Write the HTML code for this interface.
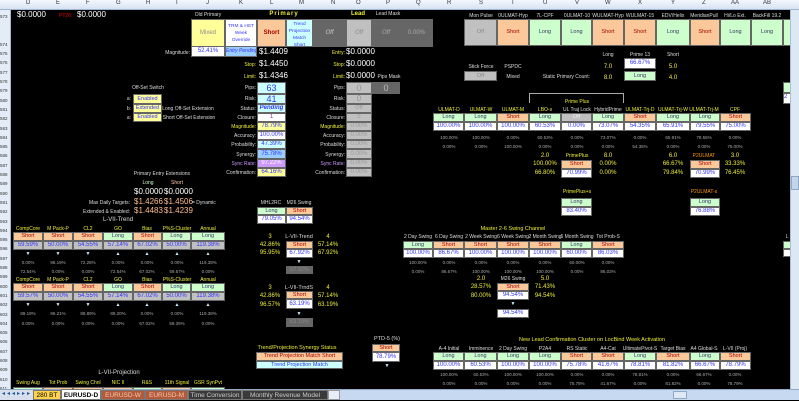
<!DOCTYPE html><html><head><meta charset="utf-8"><style>
body{margin:0;width:799px;height:400px;background:#000;overflow:hidden;position:relative;font-family:"Liberation Sans",sans-serif}
div{position:absolute;box-sizing:border-box;white-space:nowrap}
.t{font-size:5px;color:#ddd;transform:translateX(-50%)}
.r{font-size:5px;color:#ddd;transform:translateX(-100%)}
.y{color:#ee3}.o{color:#f90}.p{color:#c9f}
.v{font-size:8px;color:#fff}
.b{border:1px solid #666;text-align:center;font-size:5.5px;overflow:hidden}
.b[style*="font-size:7px"]{font-size:6px!important}
.g{background:#ccffcc;color:#336}.s{background:#fbc89a;color:#a00}.w{background:#fff;color:#33f;font-size:6px}
.gr{background:#c0c0c0;color:#33f;font-size:6px}.dg{background:#666;color:#999}.lg{background:#c0c0c0;color:#888}
.ye{background:#ffff99;color:#33f}.cy{background:#ccffff;color:#33f}.lb{background:#99ccff;color:#33f}
.sm{font-size:4.5px;color:#aaa;transform:translateX(-50%)}
</style></head><body>
<div style="left:0;top:0;width:799px;height:10px;background:linear-gradient(#f4f8fd,#d6e3f2);border-bottom:1px solid #9eb6ce;font-size:6px;color:#333">
<span style="position:absolute;left:26px">D</span><span style="position:absolute;left:56px">E</span><span style="position:absolute;left:86px">F</span><span style="position:absolute;left:116px">G</span><span style="position:absolute;left:146px">H</span><span style="position:absolute;left:176px">I</span><span style="position:absolute;left:206px">J</span><span style="position:absolute;left:239px">K</span><span style="position:absolute;left:270px">L</span><span style="position:absolute;left:299px">M</span><span style="position:absolute;left:331px">N</span><span style="position:absolute;left:356px">O</span><span style="position:absolute;left:386px">P</span><span style="position:absolute;left:416px">Q</span><span style="position:absolute;left:447px">R</span><span style="position:absolute;left:479px">S</span><span style="position:absolute;left:511px">T</span><span style="position:absolute;left:543px">U</span><span style="position:absolute;left:575px">V</span><span style="position:absolute;left:605px">W</span><span style="position:absolute;left:638px">X</span><span style="position:absolute;left:671px">Y</span><span style="position:absolute;left:702px">Z</span><span style="position:absolute;left:731px">AA</span><span style="position:absolute;left:763px">AB</span></div>
<div style="left:0;top:10px;width:11px;height:380px;background:#e4ecf7;border-right:1px solid #9eb6ce;font-size:4.5px;color:#333;line-height:9.3px;white-space:normal;overflow:hidden;padding-top:2px">573<br><br><br>574<br>575<br>576<br>577<br>578<br>579<br>580<br>581<br>582<br>583<br>584<br>585<br>586<br>587<br>588<br>589<br>590<br>591<br>592<br>593<br>594<br>595<br>596<br>597<br>598<br>599<br>600<br>601<br>602<br>603<br>604<br>605<br>606<br>607<br>608<br>609<br>610<br>611</div>

<div class="v" style="left:17px;top:10px">$0.0000</div>
<div style="left:59px;top:13px;font-size:5px;color:#e00">PT26:</div>
<div class="v" style="left:77px;top:10px">$0.0000</div>
<div class="t" style="left:208px;top:12px">Old Primary</div>
<div class="t y" style="left:284px;top:11px;font-size:6px;font-weight:bold;letter-spacing:1px">Primary</div>
<div class="t y" style="left:358px;top:11px;font-size:6px;font-weight:bold">Lead</div>
<div class="t" style="left:388px;top:11px">Lead Mask</div>
<div class="t" style="left:481px;top:13px">Mon Pulse</div><div class="t" style="left:513px;top:13px">0ULMAT-Hyp</div><div class="t" style="left:545px;top:13px">7L-CPF</div><div class="t" style="left:577px;top:13px">0ULMAT-10</div><div class="t" style="left:608px;top:13px">WULMAT-Hyp</div><div class="t" style="left:640px;top:13px">WULMAT-15</div><div class="t" style="left:673px;top:13px">EDV/Helix</div><div class="t" style="left:704px;top:13px">MeridianPull</div><div class="t" style="left:735px;top:13px">Hi/Lo Ext.</div><div class="t" style="left:767px;top:13px">BackFill 19.2</div>
<div class="b ye" style="left:191px;top:19px;width:34px;height:28px;line-height:26px;color:#888;font-size:7px">Mixed</div>
<div class="b" style="left:225px;top:19px;width:32px;height:28px;background:#fff;color:#33f;font-size:4.8px;white-space:normal;padding-top:3px;line-height:7px">TRM &amp; HST Week Override</div>
<div class="b s" style="left:257px;top:19px;width:29px;height:28px;line-height:26px;font-weight:bold;font-size:7px">Short</div>
<div class="b cy" style="left:286px;top:19px;width:27px;height:28px;font-size:4.8px;white-space:normal;padding-top:1px;line-height:7px">Trend Projection Match Short</div>
<div class="b dg" style="left:313px;top:19px;width:33px;height:28px;line-height:26px;color:#ccc;font-style:italic;font-size:7px">Off</div>
<div class="b lg" style="left:346px;top:19px;width:26px;height:28px;line-height:26px;color:#888;font-style:italic;font-size:7px">Off</div>
<div class="b dg" style="left:372px;top:19px;width:28px;height:28px;line-height:26px;color:#aaa;font-style:italic;font-size:7px">Off</div>
<div class="b dg" style="left:400px;top:19px;width:33px;height:28px;line-height:26px;color:#aaa;font-size:7px">0.00%</div>
<div class="b lg" style="left:464px;top:19px;width:33px;height:27px;line-height:25px">Off</div>
<div class="b s" style="left:497px;top:19px;width:32px;height:27px;line-height:25px">Short</div>
<div class="b g" style="left:529px;top:19px;width:32px;height:27px;line-height:25px">Long</div>
<div class="b g" style="left:561px;top:19px;width:31px;height:27px;line-height:25px">Long</div>
<div class="b s" style="left:592px;top:19px;width:32px;height:27px;line-height:25px">Short</div>
<div class="b s" style="left:624px;top:19px;width:32px;height:27px;line-height:25px">Short</div>
<div class="b g" style="left:656px;top:19px;width:34px;height:27px;line-height:25px">Long</div>
<div class="b s" style="left:690px;top:19px;width:30px;height:27px;line-height:25px">Short</div>
<div class="b g" style="left:720px;top:19px;width:31px;height:27px;line-height:25px">Long</div>
<div class="b g" style="left:751px;top:19px;width:32px;height:27px;line-height:25px">Long</div>
<div class="b g" style="left:783px;top:19px;width:8px;height:27px"></div>
<div class="r" style="left:190px;top:50px">Magnitude:</div>
<div class="b w" style="left:191px;top:46px;width:34px;height:11px;line-height:9px">52.41%</div>
<div class="b lb" style="left:225px;top:46px;width:32px;height:11px;line-height:9px;font-size:5px;font-style:italic">Entry Pending</div>
<div class="v" style="left:259px;top:47px">$1.4409</div>
<div class="r y" style="left:256px;top:62px">Stop:</div><div class="v" style="left:259px;top:59px">$1.4450</div>
<div class="r y" style="left:256px;top:74px">Limit:</div><div class="v" style="left:259px;top:71px">$1.4346</div>
<div class="r y" style="left:345px;top:50px">Entry:</div><div class="v" style="left:346px;top:47px">$0.0000</div>
<div class="r y" style="left:345px;top:62px">Stop:</div><div class="v" style="left:346px;top:59px">$0.0000</div>
<div class="r y" style="left:345px;top:74px">Limit:</div><div class="v" style="left:346px;top:71px">$0.0000</div>
<div class="t" style="left:389px;top:74px">Pips Mask</div>
<div class="t" style="left:608px;top:52px">Long</div><div class="t" style="left:640px;top:52px">Prime 13</div><div class="t" style="left:673px;top:52px">Short</div>
<div class="t" style="left:481px;top:64px">Stick Force</div><div class="t" style="left:513px;top:64px">PSPDC</div>
<div class="t y" style="left:608px;top:64px;font-size:6px">7.0</div>
<div class="b w" style="left:624px;top:58px;width:32px;height:11px;line-height:9px">66.67%</div>
<div class="t y" style="left:673px;top:64px;font-size:6px">5.0</div>
<div class="b lg" style="left:464px;top:71px;width:33px;height:10px;line-height:8px">Off</div>
<div class="t" style="left:513px;top:74px">Mixed</div>
<div class="r" style="left:590px;top:74px">Static Primary Count:</div>
<div class="t y" style="left:608px;top:75px;font-size:6px">8.0</div>
<div class="b g" style="left:624px;top:71px;width:32px;height:10px;line-height:8px">Long</div>
<div class="t y" style="left:673px;top:75px;font-size:6px">4.0</div>
<div class="b g" style="left:783px;top:82px;width:8px;height:11px"></div>
<div class="b w" style="left:783px;top:93px;width:8px;height:11px;text-align:left">2</div>
<div class="t" style="left:148px;top:85px">Off-Set Switch</div>
<div class="r" style="left:256px;top:85px">Pips:</div>
<div class="b cy" style="left:257px;top:82px;width:29px;height:12px;line-height:10px;font-size:9px">63</div>
<div class="r" style="left:345px;top:85px">Pips:</div>
<div class="b lg" style="left:346px;top:82px;width:26px;height:12px;line-height:10px;font-size:9px;color:#999">0</div>
<div class="b dg" style="left:372px;top:82px;width:28px;height:12px;line-height:10px;font-size:9px;color:#bbb">0</div>
<div class="r" style="left:131px;top:96px">a:</div>
<div class="b ye" style="left:133px;top:94px;width:29px;height:10px;line-height:8px;font-size:5.5px">Enabled</div>
<div class="r" style="left:256px;top:96px">Risk:</div>
<div class="b cy" style="left:257px;top:94px;width:29px;height:10px;line-height:8px;font-size:9px">41</div>
<div class="r" style="left:345px;top:96px">Risk:</div>
<div class="b lg" style="left:346px;top:94px;width:26px;height:10px;line-height:8px;font-size:8px;color:#999">0</div>
<div class="r" style="left:131px;top:106px">b:</div>
<div class="b ye" style="left:133px;top:104px;width:29px;height:9px;line-height:7px;font-size:5.5px">Extended</div>
<div class="t" style="left:188px;top:106px">Long Off-Set Extension</div>
<div class="r" style="left:256px;top:106px">Status:</div>
<div class="b cy" style="left:257px;top:104px;width:29px;height:9px;line-height:7px;font-weight:bold;font-style:italic;font-size:6px">Pending</div>
<div class="r" style="left:345px;top:106px">Status:</div>
<div class="b lg" style="left:346px;top:104px;width:26px;height:9px;line-height:7px;color:#999">Off</div>
<div class="r" style="left:131px;top:115px">a:</div>
<div class="b ye" style="left:133px;top:113px;width:29px;height:9px;line-height:7px;font-size:5.5px">Enabled</div>
<div class="t" style="left:189px;top:115px">Short Off-Set Extension</div>
<div class="r" style="left:256px;top:115px">Closure:</div>
<div class="b w" style="left:257px;top:113px;width:29px;height:9px;line-height:7px;color:#939">1</div>
<div class="r" style="left:345px;top:115px">Closure:</div>
<div class="b lg" style="left:346px;top:113px;width:26px;height:9px;line-height:7px;color:#999">0</div>
<div class="r y" style="left:256px;top:124px">Magnitude:</div><div class="b ye" style="left:257px;top:122px;width:29px;height:9px;line-height:7px;font-size:7px">78.79%</div>
<div class="r" style="left:256px;top:133px">Accuracy:</div><div class="b w" style="left:257px;top:131px;width:29px;height:9px;line-height:7px">100.00%</div>
<div class="r" style="left:256px;top:142px">Probability:</div><div class="b cy" style="left:257px;top:140px;width:29px;height:9px;line-height:7px;font-size:7px">47.39%</div>
<div class="r" style="left:256px;top:152px">Synergy:</div><div class="b lb" style="left:257px;top:149px;width:29px;height:10px;line-height:8px;font-size:7px">75.78%</div>
<div class="r p" style="left:256px;top:161px">Sync Rate:</div><div class="b" style="left:257px;top:159px;width:29px;height:9px;line-height:7px;background:#cc99ff;color:#fff;font-size:7px">97.22%</div>
<div class="r" style="left:256px;top:170px">Confirmation:</div><div class="b ye" style="left:257px;top:168px;width:29px;height:9px;line-height:7px;font-size:7px">64.16%</div>
<div class="r y" style="left:345px;top:124px">Magnitude:</div><div class="b lg" style="left:346px;top:122px;width:26px;height:9px;line-height:7px;font-size:7px;color:#999">0.00%</div>
<div class="r" style="left:345px;top:133px">Accuracy:</div><div class="b lg" style="left:346px;top:131px;width:26px;height:9px;line-height:7px;font-size:7px;color:#999">0.00%</div>
<div class="r" style="left:345px;top:142px">Probability:</div><div class="b lg" style="left:346px;top:140px;width:26px;height:9px;line-height:7px;font-size:7px;color:#999">0.00%</div>
<div class="r" style="left:345px;top:152px">Synergy:</div><div class="b lg" style="left:346px;top:149px;width:26px;height:10px;line-height:8px;font-size:7px;color:#999">0.00%</div>
<div class="r p" style="left:345px;top:161px">Sync Rate:</div><div class="b lg" style="left:346px;top:159px;width:26px;height:9px;line-height:7px;font-size:7px;color:#999">0.00%</div>
<div class="r" style="left:345px;top:170px">Confirmation:</div><div class="b lg" style="left:346px;top:168px;width:26px;height:9px;line-height:7px;font-size:7px;color:#999">0.00%</div>
<div style="left:529px;top:93px;width:95px;height:10px;border:1px solid #aaa;border-bottom:none"></div>
<div class="t y" style="left:577px;top:99px">Prime Plus</div>
<div class="t y" style="left:449px;top:107px">ULMAT-D</div><div class="t y" style="left:481px;top:107px">ULMAT-W</div><div class="t y" style="left:513px;top:107px">ULMAT-M</div><div class="t y" style="left:545px;top:107px">LBO-s</div><div class="t" style="left:577px;top:107px">UL Traj Lock</div><div class="t" style="left:608px;top:107px">HybridPrime</div><div class="t y" style="left:640px;top:107px">ULMAT-Trj-D</div><div class="t y" style="left:673px;top:107px">ULMAT-Trj-W</div><div class="t y" style="left:704px;top:107px">ULMAT-Trj-M</div><div class="t y" style="left:735px;top:107px">CPF</div>
<div class="b g" style="left:433px;top:113px;width:31px;height:9px;line-height:7px">Long</div><div class="b g" style="left:464px;top:113px;width:33px;height:9px;line-height:7px">Long</div><div class="b s" style="left:497px;top:113px;width:32px;height:9px;line-height:7px">Short</div><div class="b g" style="left:529px;top:113px;width:32px;height:9px;line-height:7px">Long</div><div class="b lg" style="left:561px;top:113px;width:31px;height:9px;line-height:7px;color:#eee">Off</div><div class="b g" style="left:592px;top:113px;width:32px;height:9px;line-height:7px">Long</div><div class="b s" style="left:624px;top:113px;width:32px;height:9px;line-height:7px">Short</div><div class="b g" style="left:656px;top:113px;width:34px;height:9px;line-height:7px">Long</div><div class="b g" style="left:690px;top:113px;width:30px;height:9px;line-height:7px">Long</div><div class="b s" style="left:720px;top:113px;width:31px;height:9px;line-height:7px">Short</div>
<div class="b w" style="left:433px;top:122px;width:31px;height:9px;line-height:7px">100.00%</div><div class="b w" style="left:464px;top:122px;width:33px;height:9px;line-height:7px">100.00%</div><div class="b w" style="left:497px;top:122px;width:32px;height:9px;line-height:7px">100.00%</div><div class="b w" style="left:529px;top:122px;width:32px;height:9px;line-height:7px">60.53%</div><div class="b w" style="left:561px;top:122px;width:31px;height:9px;line-height:7px">0.00%</div><div class="b w" style="left:592px;top:122px;width:32px;height:9px;line-height:7px">73.07%</div><div class="b w" style="left:624px;top:122px;width:32px;height:9px;line-height:7px">54.35%</div><div class="b w" style="left:656px;top:122px;width:34px;height:9px;line-height:7px">65.91%</div><div class="b w" style="left:690px;top:122px;width:30px;height:9px;line-height:7px">79.55%</div><div class="b w" style="left:720px;top:122px;width:31px;height:9px;line-height:7px">75.00%</div>
<div class="sm" style="left:449px;top:135px">100.00%</div><div class="sm" style="left:481px;top:135px">100.00%</div><div class="sm" style="left:513px;top:135px">0.00%</div><div class="sm" style="left:545px;top:135px">60.53%</div><div class="sm" style="left:577px;top:135px">0.00%</div><div class="sm" style="left:608px;top:135px">73.07%</div><div class="sm" style="left:640px;top:135px">0.00%</div><div class="sm" style="left:673px;top:135px">65.91%</div><div class="sm" style="left:704px;top:135px">79.55%</div><div class="sm" style="left:735px;top:135px">0.00%</div>
<div class="sm" style="left:449px;top:144px">0.00%</div><div class="sm" style="left:481px;top:144px">0.00%</div><div class="sm" style="left:513px;top:144px">100.00%</div><div class="sm" style="left:545px;top:144px">0.00%</div><div class="sm" style="left:577px;top:144px">0.00%</div><div class="sm" style="left:608px;top:144px">0.00%</div><div class="sm" style="left:640px;top:144px">54.35%</div><div class="sm" style="left:673px;top:144px">0.00%</div><div class="sm" style="left:704px;top:144px">0.00%</div><div class="sm" style="left:735px;top:144px">75.00%</div>
<div class="t y" style="left:545px;top:153px;font-size:6px">2.0</div><div class="t y" style="left:577px;top:153px">PrimePlus</div><div class="t y" style="left:608px;top:153px;font-size:6px">8.0</div>
<div class="t y" style="left:673px;top:153px;font-size:6px">6.0</div><div class="t o" style="left:704px;top:153px">P2ULMAT</div><div class="t y" style="left:735px;top:153px;font-size:6px">3.0</div>
<div class="t y" style="left:545px;top:161px;font-size:6px">100.00%</div><div class="b s" style="left:561px;top:160px;width:31px;height:9px;line-height:7px">Short</div><div class="t y" style="left:608px;top:161px;font-size:6px">0.00%</div>
<div class="t y" style="left:673px;top:161px;font-size:6px">66.67%</div><div class="b s" style="left:690px;top:160px;width:30px;height:9px;line-height:7px">Short</div><div class="t y" style="left:735px;top:161px;font-size:6px">33.33%</div>
<div class="t y" style="left:545px;top:170px;font-size:6px">66.80%</div><div class="b w" style="left:561px;top:169px;width:31px;height:9px;line-height:7px">70.99%</div><div class="t y" style="left:608px;top:170px;font-size:6px">0.00%</div>
<div class="t y" style="left:673px;top:170px;font-size:6px">79.84%</div><div class="b w" style="left:690px;top:169px;width:30px;height:9px;line-height:7px">70.99%</div><div class="t y" style="left:735px;top:170px;font-size:6px">76.45%</div>
<div class="t y" style="left:577px;top:189px">PrimePlus+s</div><div class="t o" style="left:704px;top:189px">P2ULMAT-s</div>
<div class="b g" style="left:561px;top:198px;width:31px;height:9px;line-height:7px">Long</div><div class="b g" style="left:690px;top:198px;width:30px;height:9px;line-height:7px">Long</div>
<div class="b w" style="left:561px;top:207px;width:31px;height:9px;line-height:7px">83.40%</div><div class="b w" style="left:690px;top:207px;width:30px;height:9px;line-height:7px">76.88%</div>
<div class="t" style="left:162px;top:171px">Primary Entry Extensions</div>
<div class="t" style="left:148px;top:180px;color:#cfc">Long</div><div class="t" style="left:177px;top:180px;color:#fca">Short</div>
<div class="v" style="left:134px;top:187px">$0.0000</div><div class="v" style="left:164px;top:187px">$0.0000</div>
<div class="r" style="left:130px;top:200px">Max Daily Targets:</div>
<div class="v" style="left:134px;top:197px;color:#fb8">$1.4266</div><div class="v" style="left:164px;top:197px;color:#fb8">$1.4506</div>
<div style="left:192px;top:200px;font-size:5px;color:#ddd">= Dynamic</div>
<div class="r" style="left:130px;top:209px">Extended &amp; Enabled:</div>
<div class="v" style="left:134px;top:206px;color:#fb8">$1.4483</div><div class="v" style="left:164px;top:206px;color:#fb8">$1.4239</div>
<div class="t" style="left:118px;top:217px;font-size:6px">L-VII-Trend</div>
<div class="t y" style="left:28px;top:226px">CompCore</div><div class="t y" style="left:58px;top:226px">M Pack-P</div><div class="t y" style="left:88px;top:226px">CL2</div><div class="t y" style="left:118px;top:226px">GO</div><div class="t y" style="left:147px;top:226px">Bias</div><div class="t y" style="left:177px;top:226px">P%S-Cluster</div><div class="t y" style="left:208px;top:226px">Annual</div>
<div class="b s" style="left:13px;top:232px;width:30px;height:9px;line-height:7px">Short</div><div class="b s" style="left:43px;top:232px;width:30px;height:9px;line-height:7px">Short</div><div class="b s" style="left:73px;top:232px;width:30px;height:9px;line-height:7px">Short</div><div class="b g" style="left:103px;top:232px;width:30px;height:9px;line-height:7px">Long</div><div class="b s" style="left:133px;top:232px;width:29px;height:9px;line-height:7px">Short</div><div class="b g" style="left:162px;top:232px;width:29px;height:9px;line-height:7px">Long</div><div class="b g" style="left:191px;top:232px;width:34px;height:9px;line-height:7px">Long</div>
<div class="b gr" style="left:13px;top:241px;width:30px;height:9px;line-height:7px">59.59%</div><div class="b gr" style="left:43px;top:241px;width:30px;height:9px;line-height:7px">50.00%</div><div class="b gr" style="left:73px;top:241px;width:30px;height:9px;line-height:7px">54.55%</div><div class="b gr" style="left:103px;top:241px;width:30px;height:9px;line-height:7px">57.14%</div><div class="b gr" style="left:133px;top:241px;width:29px;height:9px;line-height:7px">67.02%</div><div class="b gr" style="left:162px;top:241px;width:29px;height:9px;line-height:7px">50.00%</div><div class="b gr" style="left:191px;top:241px;width:34px;height:9px;line-height:7px">119.38%</div>
<div class="t" style="left:28px;top:251px;color:#cef">▼</div><div class="t" style="left:58px;top:251px;color:#cef">▼</div><div class="t" style="left:88px;top:251px;color:#cef">▼</div><div class="t" style="left:118px;top:251px;color:#cef">▲</div><div class="t" style="left:147px;top:251px;color:#cef">▲</div><div class="t" style="left:177px;top:251px;color:#cef">▲</div><div class="t" style="left:208px;top:251px;color:#cef">▲</div>
<div class="sm" style="left:28px;top:260px">0.00%</div><div class="sm" style="left:58px;top:260px">96.19%</div><div class="sm" style="left:88px;top:260px">72.28%</div><div class="sm" style="left:118px;top:260px">0.00%</div><div class="sm" style="left:147px;top:260px">0.00%</div><div class="sm" style="left:177px;top:260px">0.00%</div><div class="sm" style="left:208px;top:260px">119.38%</div>
<div class="sm" style="left:28px;top:269px">72.54%</div><div class="sm" style="left:58px;top:269px">0.00%</div><div class="sm" style="left:88px;top:269px">0.00%</div><div class="sm" style="left:118px;top:269px">72.54%</div><div class="sm" style="left:147px;top:269px">67.02%</div><div class="sm" style="left:177px;top:269px">59.57%</div><div class="sm" style="left:208px;top:269px">0.00%</div>
<div class="t y" style="left:28px;top:277px">CompCore</div><div class="t y" style="left:58px;top:277px">M Pack-P</div><div class="t y" style="left:88px;top:277px">CL2</div><div class="t y" style="left:118px;top:277px">GO</div><div class="t y" style="left:147px;top:277px">Bias</div><div class="t y" style="left:177px;top:277px">P%S-Cluster</div><div class="t y" style="left:208px;top:277px">Annual</div>
<div class="b s" style="left:13px;top:283px;width:30px;height:9px;line-height:7px">Short</div><div class="b s" style="left:43px;top:283px;width:30px;height:9px;line-height:7px">Short</div><div class="b s" style="left:73px;top:283px;width:30px;height:9px;line-height:7px">Short</div><div class="b g" style="left:103px;top:283px;width:30px;height:9px;line-height:7px">Long</div><div class="b s" style="left:133px;top:283px;width:29px;height:9px;line-height:7px">Short</div><div class="b g" style="left:162px;top:283px;width:29px;height:9px;line-height:7px">Long</div><div class="b g" style="left:191px;top:283px;width:34px;height:9px;line-height:7px">Long</div>
<div class="b gr" style="left:13px;top:292px;width:30px;height:9px;line-height:7px">59.57%</div><div class="b gr" style="left:43px;top:292px;width:30px;height:9px;line-height:7px">50.00%</div><div class="b gr" style="left:73px;top:292px;width:30px;height:9px;line-height:7px">54.55%</div><div class="b gr" style="left:103px;top:292px;width:30px;height:9px;line-height:7px">57.14%</div><div class="b gr" style="left:133px;top:292px;width:29px;height:9px;line-height:7px">67.02%</div><div class="b gr" style="left:162px;top:292px;width:29px;height:9px;line-height:7px">50.00%</div><div class="b gr" style="left:191px;top:292px;width:34px;height:9px;line-height:7px">119.38%</div>
<div class="t" style="left:28px;top:302px;color:#cef">▼</div><div class="t" style="left:58px;top:302px;color:#cef">▼</div><div class="t" style="left:88px;top:302px;color:#cef">▼</div><div class="t" style="left:118px;top:302px;color:#cef">▲</div><div class="t" style="left:147px;top:302px;color:#cef">▲</div><div class="t" style="left:177px;top:302px;color:#cef">▲</div><div class="t" style="left:208px;top:302px;color:#cef">▲</div>
<div class="sm" style="left:28px;top:311px">89.19%</div><div class="sm" style="left:58px;top:311px">96.21%</div><div class="sm" style="left:88px;top:311px">88.89%</div><div class="sm" style="left:118px;top:311px">89.20%</div><div class="sm" style="left:147px;top:311px">0.00%</div><div class="sm" style="left:177px;top:311px">0.00%</div><div class="sm" style="left:208px;top:311px">119.38%</div>
<div class="sm" style="left:28px;top:321px">0.00%</div><div class="sm" style="left:58px;top:321px">0.00%</div><div class="sm" style="left:88px;top:321px">0.00%</div><div class="sm" style="left:118px;top:321px">0.00%</div><div class="sm" style="left:147px;top:321px">67.02%</div><div class="sm" style="left:177px;top:321px">59.35%</div><div class="sm" style="left:208px;top:321px">0.00%</div>
<div class="t" style="left:119px;top:370px;font-size:6px">L-VII-Projection</div>
<div class="t y" style="left:28px;top:380px">Swing Aug</div><div class="t y" style="left:58px;top:380px">Tot Prob</div><div class="t y" style="left:88px;top:380px">Swing Chnl</div><div class="t y" style="left:118px;top:380px">NIC II</div><div class="t y" style="left:147px;top:380px">R&amp;S</div><div class="t y" style="left:177px;top:380px">11th Signal</div><div class="t y" style="left:208px;top:380px">GSR SynPvt</div>
<div class="b g" style="left:13px;top:387px;width:30px;height:4px"></div><div class="b s" style="left:43px;top:387px;width:30px;height:4px"></div><div class="b s" style="left:73px;top:387px;width:30px;height:4px"></div><div class="b s" style="left:103px;top:387px;width:30px;height:4px"></div><div class="b g" style="left:133px;top:387px;width:29px;height:4px"></div><div class="b s" style="left:162px;top:387px;width:29px;height:4px"></div><div class="b g" style="left:191px;top:387px;width:34px;height:4px"></div>
<div class="t" style="left:271px;top:200px">MHL2RC</div><div class="t" style="left:299px;top:200px">M26 Swing</div>
<div class="b g" style="left:257px;top:207px;width:29px;height:8px;line-height:6px">Long</div><div class="b s" style="left:286px;top:207px;width:27px;height:8px;line-height:6px">Short</div>
<div class="b w" style="left:257px;top:215px;width:29px;height:9px;line-height:7px">79.05%</div><div class="b w" style="left:286px;top:215px;width:27px;height:9px;line-height:7px">94.54%</div>
<div class="t y" style="left:270px;top:234px;font-size:6px">3</div><div class="t" style="left:299px;top:234px;font-size:5.5px">L-VII-Trend</div><div class="t y" style="left:328px;top:234px;font-size:6px">4</div>
<div class="t y" style="left:270px;top:242px;font-size:6px">42.86%</div><div class="b s" style="left:286px;top:241px;width:27px;height:8px;line-height:6px">Short</div><div class="t y" style="left:328px;top:242px;font-size:6px">57.14%</div>
<div class="t y" style="left:270px;top:250px;font-size:6px">95.95%</div><div class="b w" style="left:286px;top:249px;width:27px;height:9px;line-height:7px">67.92%</div><div class="t y" style="left:328px;top:250px;font-size:6px">67.92%</div>
<div class="t" style="left:299px;top:259px;color:#cef">▼</div>
<div class="b dg" style="left:286px;top:266px;width:27px;height:8px;line-height:6px;color:#888">67.92%</div>
<div class="t y" style="left:270px;top:285px;font-size:6px">3</div><div class="t" style="left:299px;top:285px;font-size:5.5px">L-VII-TrndS</div><div class="t y" style="left:328px;top:285px;font-size:6px">4</div>
<div class="t y" style="left:270px;top:293px;font-size:6px">42.86%</div><div class="b s" style="left:286px;top:291px;width:27px;height:8px;line-height:6px">Short</div><div class="t y" style="left:328px;top:293px;font-size:6px">57.14%</div>
<div class="t y" style="left:270px;top:302px;font-size:6px">96.57%</div><div class="b w" style="left:286px;top:299px;width:27px;height:10px;line-height:8px">63.19%</div><div class="t y" style="left:328px;top:302px;font-size:6px">63.19%</div>
<div class="t" style="left:299px;top:311px;color:#cef">▼</div>
<div class="b dg" style="left:286px;top:318px;width:27px;height:9px;line-height:7px;color:#888">63.19%</div>
<div class="t y" style="left:297px;top:345px;font-size:5.5px">Trend/Projection Synergy Status</div>
<div class="b s" style="left:256px;top:352px;width:87px;height:9px;line-height:7px;font-size:5.5px">Trend Projection Match Short</div>
<div class="b cy" style="left:256px;top:361px;width:87px;height:8px;line-height:6px;font-size:5.5px">Trend Projection Match</div>
<div class="t" style="left:387px;top:336px;font-size:5.5px">PTD-5 (%)</div>
<div class="b s" style="left:372px;top:344px;width:28px;height:8px;line-height:6px">Short</div>
<div class="b w" style="left:372px;top:352px;width:28px;height:10px;line-height:8px">78.79%</div>
<div class="t" style="left:387px;top:363px;color:#cef">▼</div>
<div class="t y" style="left:513px;top:226px;font-size:5.5px">Master 2-6 Swing Channel</div>
<div class="t" style="left:418px;top:234px">2 Day Swing</div><div class="t" style="left:449px;top:234px">6 Day Swing</div><div class="t" style="left:481px;top:234px">2 Week Swing</div><div class="t" style="left:513px;top:234px">6 Week Swing</div><div class="t" style="left:545px;top:234px">2 Month Swing</div><div class="t" style="left:577px;top:234px">6 Month Swing</div><div class="t" style="left:608px;top:234px">Tot Prob-S</div>
<div class="b g" style="left:403px;top:241px;width:30px;height:8px;line-height:6px">Long</div><div class="b s" style="left:433px;top:241px;width:31px;height:8px;line-height:6px">Short</div><div class="b s" style="left:464px;top:241px;width:33px;height:8px;line-height:6px">Short</div><div class="b s" style="left:497px;top:241px;width:32px;height:8px;line-height:6px">Short</div><div class="b s" style="left:529px;top:241px;width:32px;height:8px;line-height:6px">Short</div><div class="b g" style="left:561px;top:241px;width:31px;height:8px;line-height:6px">Long</div><div class="b s" style="left:592px;top:241px;width:32px;height:8px;line-height:6px">Short</div>
<div class="b w" style="left:403px;top:249px;width:30px;height:9px;line-height:7px">100.00%</div><div class="b w" style="left:433px;top:249px;width:31px;height:9px;line-height:7px">86.67%</div><div class="b w" style="left:464px;top:249px;width:33px;height:9px;line-height:7px">100.00%</div><div class="b w" style="left:497px;top:249px;width:32px;height:9px;line-height:7px">100.00%</div><div class="b w" style="left:529px;top:249px;width:32px;height:9px;line-height:7px">100.00%</div><div class="b w" style="left:561px;top:249px;width:31px;height:9px;line-height:7px">60.00%</div><div class="b w" style="left:592px;top:249px;width:32px;height:9px;line-height:7px">86.03%</div>
<div class="sm" style="left:418px;top:260px">100.00%</div><div class="sm" style="left:449px;top:260px">0.00%</div><div class="sm" style="left:481px;top:260px">0.00%</div><div class="sm" style="left:513px;top:260px">0.00%</div><div class="sm" style="left:545px;top:260px">0.00%</div><div class="sm" style="left:577px;top:260px">60.00%</div><div class="sm" style="left:608px;top:260px">0.00%</div>
<div class="sm" style="left:418px;top:269px">0.00%</div><div class="sm" style="left:449px;top:269px">86.67%</div><div class="sm" style="left:481px;top:269px">100.00%</div><div class="sm" style="left:513px;top:269px">100.00%</div><div class="sm" style="left:545px;top:269px">100.00%</div><div class="sm" style="left:577px;top:269px">0.00%</div><div class="sm" style="left:608px;top:269px">86.03%</div>
<div class="t y" style="left:481px;top:276px;font-size:6px">2.0</div><div class="t" style="left:513px;top:276px">M26 Swing</div><div class="t y" style="left:545px;top:276px;font-size:6px">5.0</div>
<div class="t y" style="left:481px;top:284px;font-size:6px">28.57%</div><div class="b s" style="left:497px;top:283px;width:32px;height:8px;line-height:6px">Short</div><div class="t y" style="left:545px;top:284px;font-size:6px">71.43%</div>
<div class="t y" style="left:481px;top:293px;font-size:6px">80.00%</div><div class="b w" style="left:497px;top:291px;width:32px;height:9px;line-height:7px">94.54%</div><div class="t y" style="left:545px;top:293px;font-size:6px">94.54%</div>
<div class="t" style="left:513px;top:301px;color:#cef">▼</div>
<div class="b w" style="left:497px;top:309px;width:32px;height:9px;line-height:7px">94.54%</div>
<div class="t" style="left:787px;top:234px">L</div>
<div class="b g" style="left:783px;top:241px;width:8px;height:8px"></div><div class="b w" style="left:783px;top:249px;width:8px;height:8px"></div>
<div class="t y" style="left:592px;top:337px;font-size:5.5px">New Lead Confirmation Cluster on LocBind Week Activation</div>
<div class="t" style="left:449px;top:346px">A-4 Initial</div><div class="t" style="left:481px;top:346px">Imminence</div><div class="t" style="left:513px;top:346px">2 Day Swing</div><div class="t" style="left:545px;top:346px">P2A4</div><div class="t" style="left:577px;top:346px">RS Static</div><div class="t" style="left:608px;top:346px">A4-Cat</div><div class="t" style="left:640px;top:346px">UltimatePivot-S</div><div class="t" style="left:673px;top:346px">Target Bias</div><div class="t" style="left:704px;top:346px">A4 Global-S</div><div class="t" style="left:735px;top:346px">L-VII (Proj)</div>
<div class="b g" style="left:433px;top:352px;width:31px;height:9px;line-height:7px">Long</div><div class="b g" style="left:464px;top:352px;width:33px;height:9px;line-height:7px">Long</div><div class="b g" style="left:497px;top:352px;width:32px;height:9px;line-height:7px">Long</div><div class="b g" style="left:529px;top:352px;width:32px;height:9px;line-height:7px">Long</div><div class="b s" style="left:561px;top:352px;width:31px;height:9px;line-height:7px">Short</div><div class="b s" style="left:592px;top:352px;width:32px;height:9px;line-height:7px">Short</div><div class="b g" style="left:624px;top:352px;width:32px;height:9px;line-height:7px">Long</div><div class="b s" style="left:656px;top:352px;width:34px;height:9px;line-height:7px">Short</div><div class="b g" style="left:690px;top:352px;width:30px;height:9px;line-height:7px">Long</div><div class="b s" style="left:720px;top:352px;width:31px;height:9px;line-height:7px">Short</div>
<div class="b w" style="left:433px;top:361px;width:31px;height:9px;line-height:7px">100.00%</div><div class="b w" style="left:464px;top:361px;width:33px;height:9px;line-height:7px">60.53%</div><div class="b w" style="left:497px;top:361px;width:32px;height:9px;line-height:7px">100.00%</div><div class="b w" style="left:529px;top:361px;width:32px;height:9px;line-height:7px">100.00%</div><div class="b w" style="left:561px;top:361px;width:31px;height:9px;line-height:7px">75.78%</div><div class="b w" style="left:592px;top:361px;width:32px;height:9px;line-height:7px">41.67%</div><div class="b w" style="left:624px;top:361px;width:32px;height:9px;line-height:7px">78.81%</div><div class="b w" style="left:656px;top:361px;width:34px;height:9px;line-height:7px">81.82%</div><div class="b w" style="left:690px;top:361px;width:30px;height:9px;line-height:7px">66.67%</div><div class="b w" style="left:720px;top:361px;width:31px;height:9px;line-height:7px">78.79%</div>
<div class="sm" style="left:449px;top:372px">100.00%</div><div class="sm" style="left:481px;top:372px">60.53%</div><div class="sm" style="left:513px;top:372px">100.00%</div><div class="sm" style="left:545px;top:372px">100.00%</div><div class="sm" style="left:577px;top:372px">0.00%</div><div class="sm" style="left:608px;top:372px">0.00%</div><div class="sm" style="left:640px;top:372px">78.81%</div><div class="sm" style="left:673px;top:372px">0.00%</div><div class="sm" style="left:704px;top:372px">66.67%</div><div class="sm" style="left:735px;top:372px">0.00%</div>
<div class="sm" style="left:449px;top:381px">0.00%</div><div class="sm" style="left:481px;top:381px">0.00%</div><div class="sm" style="left:513px;top:381px">0.00%</div><div class="sm" style="left:545px;top:381px">0.00%</div><div class="sm" style="left:577px;top:381px">75.78%</div><div class="sm" style="left:608px;top:381px">41.67%</div><div class="sm" style="left:640px;top:381px">0.00%</div><div class="sm" style="left:673px;top:381px">81.82%</div><div class="sm" style="left:704px;top:381px">0.00%</div><div class="sm" style="left:735px;top:381px">78.79%</div>
<div style="left:790px;top:10px;width:9px;height:380px;background:#dde8f5;border-left:1px solid #a9bfd6"></div>
<div style="left:791px;top:176px;width:8px;height:14px;background:#c3d5ea;border:1px solid #8fa8c4"></div>
<div style="left:0;top:389px;width:799px;height:11px;background:#c6d9f0;border-top:1px solid #8fa8c4"></div>
<div style="left:0;top:390px;width:340px;height:10px;background:#d6dfeb"></div>
<div style="left:2px;top:390px;font-size:6px;color:#2050a0;letter-spacing:2px">◂◂◂▸▸▸</div>
<div style="left:33px;top:390px;width:28px;height:10px;background:#ffd44a;font-size:6.5px;text-align:center;line-height:10px;color:#000;border:1px solid #777">280 BT</div>
<div style="left:61px;top:389px;width:40px;height:11px;background:#fff;font-size:6.5px;font-weight:bold;text-align:center;line-height:11px;color:#000;border:1px solid #777">EURUSD-D</div>
<div style="left:101px;top:390px;width:44px;height:10px;background:#b35a3a;font-size:6.5px;text-align:center;line-height:10px;color:#f5c8b0;border:1px solid #777">EURUSD-W</div>
<div style="left:145px;top:390px;width:43px;height:10px;background:#b35a3a;font-size:6.5px;text-align:center;line-height:10px;color:#f5c8b0;border:1px solid #777">EURUSD-M</div>
<div style="left:188px;top:390px;width:54px;height:10px;background:#3a3a3a;font-size:6.5px;text-align:center;line-height:10px;color:#ccc;border:1px solid #777">Time Conversion</div>
<div style="left:242px;top:390px;width:86px;height:10px;background:#3a3a3a;font-size:6.5px;text-align:center;line-height:10px;color:#ccc;border:1px solid #777">Monthly Revenue Model</div>
<div style="left:328px;top:390px;width:12px;height:10px;background:#e8eef8;border:1px solid #999"></div>
<div style="left:673px;top:391px;width:14px;height:8px;background:#dfe9f6;border:1px solid #8fa8c4"></div>
</body></html>
